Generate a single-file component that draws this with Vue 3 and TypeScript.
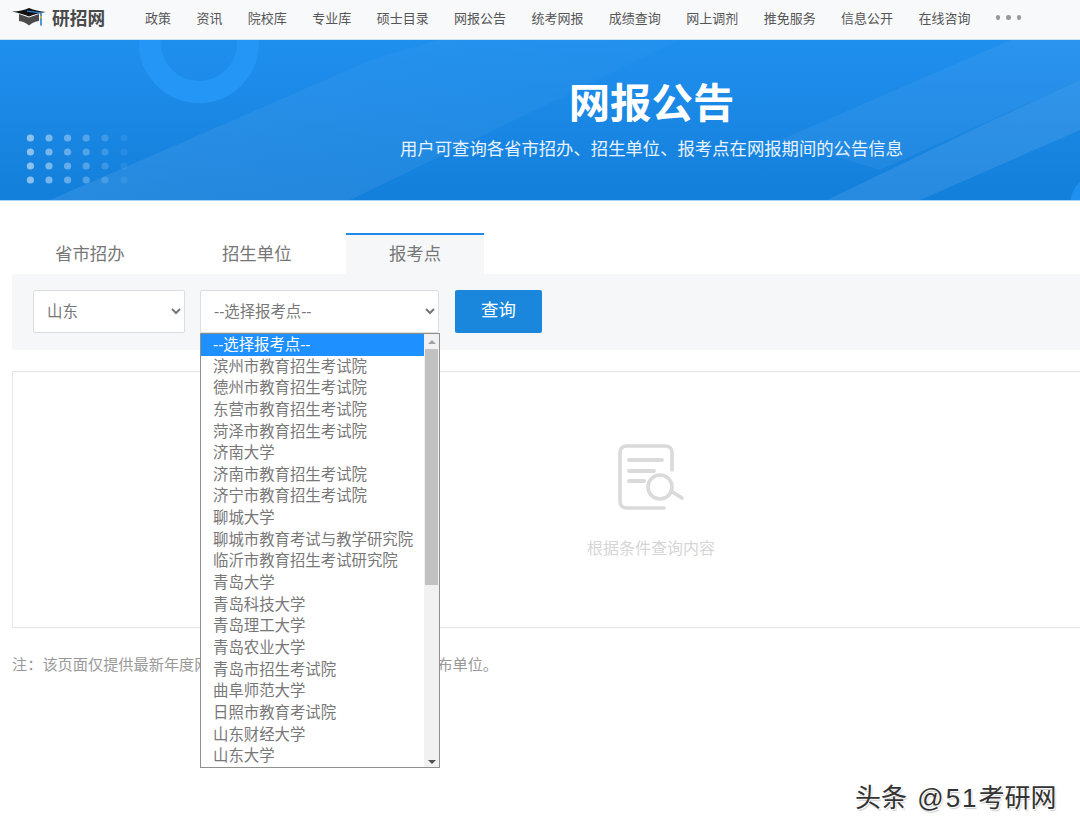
<script setup lang="ts">
import { ref } from 'vue';

const navItems = ['政策', '资讯', '院校库', '专业库', '硕士目录', '网报公告', '统考网报', '成绩查询', '网上调剂', '推免服务', '信息公开', '在线咨询'];
const tabs = ['省市招办', '招生单位', '报考点'];
const activeTab = ref(2);
const province = ref('山东');
const placeholder = '--选择报考点--';
const site = ref(placeholder);

const sites = [
  placeholder,
  '滨州市教育招生考试院',
  '德州市教育招生考试院',
  '东营市教育招生考试院',
  '菏泽市教育招生考试院',
  '济南大学',
  '济南市教育招生考试院',
  '济宁市教育招生考试院',
  '聊城大学',
  '聊城市教育考试与教学研究院',
  '临沂市教育招生考试研究院',
  '青岛大学',
  '青岛科技大学',
  '青岛理工大学',
  '青岛农业大学',
  '青岛市招生考试院',
  '曲阜师范大学',
  '日照市教育考试院',
  '山东财经大学',
  '山东大学'
];

// dot grid in the banner, fading to the right
const dotCols = [30.4, 49, 67.6, 86.2, 105, 124];
const dotRows = [138, 152, 166, 180];
const dotOpacity = [0.5, 0.42, 0.34, 0.26, 0.16, 0.07];
</script>

<template>
  <div class="page">
    <header class="topbar">
      <div class="logo">
        <svg class="logo-cap" viewBox="0 0 34 18" width="34" height="18">
          <path d="M7 6 L17 9.5 L27 6 L27 13 C23 13.5 20 15 17 17.5 C14 15 11 13.5 7 13 Z" fill="#4b4b4b" />
          <path d="M0 3.6 C7 3.4 12 2 17 0 C22 2 28 3.4 34 4 C28 5 22 6.4 17 8.4 C12 6.4 6 5 0 3.6 Z" fill="#111" />
          <path d="M15 3.2 L29 4.8" stroke="#2a7fd0" stroke-width="1.2" fill="none" />
          <rect x="28.2" y="4.6" width="1.6" height="13" fill="#2a7fd0" />
          <rect x="28.2" y="8" width="1.6" height="2.4" fill="#e0b13c" />
        </svg>
        <span class="logo-text">研招网</span>
      </div>
      <nav class="nav">
        <a v-for="item in navItems" :key="item" class="nav-item">{{ item }}</a>
        <span class="nav-more"><i></i><i></i><i></i></span>
      </nav>
    </header>

    <section class="banner">
      <svg class="banner-art" viewBox="0 0 1080 160" width="1080" height="160">
        <defs>
          <linearGradient id="bandFade" x1="0" y1="1" x2="1" y2="0">
            <stop offset="0" stop-color="#ffffff" stop-opacity="0.09" />
            <stop offset="0.55" stop-color="#ffffff" stop-opacity="0.03" />
            <stop offset="1" stop-color="#ffffff" stop-opacity="0" />
          </linearGradient>
        </defs>
        <polygon points="50,160 371,20 640,-60 800,-60 560,58 350,160" fill="url(#bandFade)" />
        <polygon points="827,160 987,83 1080,40 1080,90 920,160" fill="#ffffff" opacity="0.09" />
        <polygon points="780,100 1080,-30 1080,40 880,130" fill="#ffffff" opacity="0.05" />
        <circle cx="1102" cy="165" r="32" fill="#1f90f0" />
        <circle cx="199" cy="3" r="49" fill="none" stroke="#2496f5" stroke-width="22" />
        <template v-for="y in dotRows" :key="y">
          <circle
            v-for="(x, i) in dotCols"
            :key="x"
            :cx="x"
            :cy="y - 40"
            r="3.6"
            fill="#ffffff"
            :opacity="dotOpacity[i]"
          />
        </template>
      </svg>
      <h1 class="banner-title">网报公告</h1>
      <p class="banner-sub">用户可查询各省市招办、招生单位、报考点在网报期间的公告信息</p>
    </section>

    <main class="content">
      <div class="tabs">
        <div
          v-for="(tab, i) in tabs"
          :key="tab"
          class="tab"
          :class="{ active: i === activeTab }"
          @click="activeTab = i"
        >{{ tab }}</div>
      </div>

      <div class="search">
        <select v-model="province" class="select select-province">
          <option>山东</option>
        </select>
        <div class="site-wrap">
          <select v-model="site" class="select select-site">
            <option v-for="s in sites" :key="s">{{ s }}</option>
          </select>
          <div class="dropdown">
            <ul class="dropdown-list">
              <li
                v-for="(s, i) in sites"
                :key="s"
                class="dropdown-item"
                :class="{ selected: i === 0 }"
              >{{ s }}</li>
            </ul>
            <div class="scroll">
              <span class="arrow arrow-up"></span>
              <span class="thumb"></span>
              <span class="arrow arrow-down"></span>
            </div>
          </div>
        </div>
        <button class="query-btn">查询</button>
      </div>

      <div class="result">
        <svg class="empty-icon" viewBox="0 0 66 66" width="66" height="66" fill="none" stroke="#dadada" stroke-linecap="round">
          <path d="M46 64 H9 Q2 64 2 57 V9 Q2 2 9 2 H47 Q54 2 54 9 V26" stroke-width="3.6" />
          <path d="M11 16 H44 M11 27 H36 M11 37 H26" stroke-width="3.8" />
          <circle cx="42" cy="43" r="12" stroke-width="3.6" />
          <path d="M53 47 L64 54" stroke-width="3.8" />
        </svg>
        <p class="empty-text">根据条件查询内容</p>
      </div>

      <p class="note">注：该页面仅提供最新年度网报公告信息，详情请咨询各相关发布单位。</p>
    </main>

    <div class="watermark">头条 <span class="wm-latin">@51</span>考研网</div>
  </div>
</template>

<style scoped>
.page {
  position: relative;
  width: 1080px;
  height: 835px;
  overflow: hidden;
  background: #fff;
  font-family: "Liberation Sans", "Noto Sans CJK SC", sans-serif;
}

.topbar {
  display: flex;
  align-items: center;
  height: 39px;
  background: #f8f9fb;
  border-bottom: 1px solid #cfe3f5;
  padding-left: 12px;
}

.logo {
  display: flex;
  align-items: center;
  gap: 6px;
  width: 133px;
  margin-top: -5px;
}

.logo-text {
  font-size: 17.7px;
  font-weight: 700;
  color: #4a4a4a;
}

.nav {
  display: flex;
  align-items: center;
  gap: 25.4px;
  margin-top: -4px;
}

.nav-item {
  font-size: 13px;
  color: #555;
}

.nav-more {
  display: flex;
  gap: 6px;
}

.nav-more i {
  width: 4.5px;
  height: 4.5px;
  border-radius: 50%;
  background: #999;
}

.banner {
  position: relative;
  height: 160px;
  overflow: hidden;
  background: linear-gradient(180deg, #1f8fee 0%, #1a87e4 50%, #127fdb 100%);
  border-bottom: 1px solid #a9d4f6;
  padding-left: 223px;
  text-align: center;
  color: #fff;
}

.banner-art {
  position: absolute;
  left: 0;
  top: 0;
}

.banner-title {
  position: relative;
  margin: 34px 0 0;
  font-size: 41.4px;
  line-height: 60px;
  font-weight: 700;
}

.banner-sub {
  position: relative;
  margin: 1px 0 0;
  font-size: 17.35px;
  line-height: 28px;
  color: #e8f3fd;
}

.content {
  padding: 32px 0 0 12px;
}

.tabs {
  display: flex;
  gap: 11.4px;
}

.tab {
  height: 39px;
  padding: 0 43px;
  font-size: 17.4px;
  line-height: 39px;
  color: #777;
  border-top: 2px solid transparent;
  cursor: pointer;
}

.tab.active {
  background: #f6f7f9;
  border-top-color: #1d8ce8;
}

.search {
  display: flex;
  align-items: flex-start;
  height: 76px;
  padding: 16px 0 0 21px;
  box-sizing: border-box;
  background: #f6f7f9;
}

.select {
  height: 43px;
  box-sizing: border-box;
  padding-left: 9px;
  font-family: inherit;
  font-size: 15.4px;
  color: #777;
  background: #fff;
  border: 1px solid #ddd;
  border-radius: 2px;
}

.select-province {
  width: 152px;
  margin-right: 15px;
}

.site-wrap {
  position: relative;
  width: 239px;
  margin-right: 16px;
}

.select-site {
  width: 100%;
}

.dropdown {
  position: absolute;
  left: 0;
  top: 43px;
  z-index: 5;
  display: flex;
  width: 240px;
  height: 435px;
  box-sizing: border-box;
  background: #fff;
  border: 1px solid #8f8f8f;
}

.dropdown-list {
  flex: 1;
  margin: 0;
  padding: 0;
  list-style: none;
}

.dropdown-item {
  height: 21.65px;
  padding-left: 12px;
  font-size: 15.4px;
  line-height: 22.4px;
  color: #777;
  white-space: nowrap;
}

.dropdown-item.selected {
  background: #1e90ff;
  color: #fff;
}

.scroll {
  display: flex;
  flex-direction: column;
  align-items: center;
  width: 15px;
  background: #f1f1f1;
}

.arrow {
  width: 0;
  height: 0;
  border-left: 4px solid transparent;
  border-right: 4px solid transparent;
}

.arrow-up {
  margin: 6px 0 5px;
  border-bottom: 4px solid #a3a3a3;
}

.arrow-down {
  margin: auto 0 3px;
  border-top: 4px solid #505050;
}

.thumb {
  width: 13px;
  height: 236px;
  background: #c1c1c1;
}

.query-btn {
  width: 87px;
  height: 43px;
  padding: 0 0 6px;
  font-family: inherit;
  font-size: 17.4px;
  color: #fff;
  background: #1a87dd;
  border: none;
  border-radius: 2px;
}

.result {
  display: flex;
  flex-direction: column;
  align-items: center;
  width: 1278px;
  height: 257px;
  margin-top: 21px;
  box-sizing: border-box;
  padding-top: 72px;
  background: #fff;
  border: 1px solid #e6e6e6;
}

.empty-icon {
  display: block;
}

.empty-text {
  margin: 27px 0 0;
  font-size: 16px;
  line-height: 24px;
  color: #d6d6d6;
}

.note {
  margin: 26px 0 0;
  font-size: 15.2px;
  line-height: 22px;
  color: #999;
  white-space: nowrap;
}

.watermark {
  position: absolute;
  left: 855px;
  top: 780px;
  font-size: 26px;
  line-height: 36px;
  word-spacing: 3px;
  color: #333;
  white-space: nowrap;
  text-shadow: 1px 1px 0 rgba(255, 255, 255, 0.9), 1.5px 1.5px 1px rgba(0, 0, 0, 0.2);
}

.wm-latin {
  letter-spacing: 2px;
}
</style>

<style>
html,
body {
  margin: 0;
  background: #fff;
  overflow: hidden;
}
</style>
